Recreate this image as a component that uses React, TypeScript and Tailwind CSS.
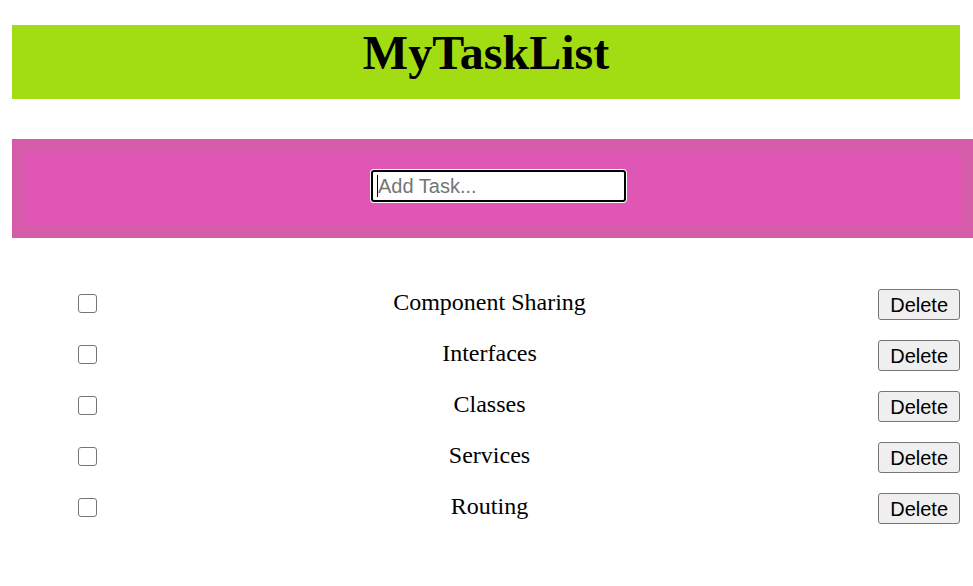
import React from "react";

const tasks = ["Component Sharing", "Interfaces", "Classes", "Services", "Routing"];

export default function App() {
  return (
    <div className="w-[973px] h-[586px] bg-white overflow-hidden" style={{ fontFamily: '"Liberation Serif", serif' }}>
      <div className="pt-[25px] px-[12px]">
        <div className="h-[74px] w-[948px] bg-[#a2dd13] text-center">
          <h1 className="text-[48px] leading-[55px] font-bold text-black" style={{ fontFamily: '"Liberation Serif", serif' }}>
            MyTaskList
          </h1>
        </div>
      </div>
      <div className="mt-[40px] ml-[12px] w-[961px] h-[99px] border-[12px] border-[#d45ca8] bg-[#e056b4] flex justify-center pt-[18px]">
        <div className="relative h-[34px] w-[257px] rounded-[4px] bg-white p-[1px] ml-[12px]">
          <input
            type="text"
            placeholder="Add Task..."
            className="w-full h-full border-2 border-black rounded-[3px] bg-white pl-[5px] text-[20px] text-black placeholder:text-[#757575] outline-none"
            style={{ fontFamily: '"Liberation Sans", Arial, sans-serif' }}
          />
          <span className="absolute left-[7px] top-[6px] w-[1px] h-[22px] bg-black" />
        </div>
      </div>
      <div className="mt-[39px] ml-[12px] w-[955px] flex flex-col">
        {tasks.map((t) => (
          <div key={t} className="flex items-center h-[51px]">
            <div className="w-[120px] flex items-center">
              <input
                type="checkbox"
                className="appearance-none ml-[66px] mt-[2px] w-[19px] h-[19px] border border-[#767676] rounded-[3px] bg-white"
              />
            </div>
            <div className="flex-1 text-center text-[24px] leading-[28px] text-black -mt-[1px]">{t}</div>
            <div className="w-[120px] flex justify-end pr-[7px]">
              <button
                className="mt-[4px] h-[31px] px-[11px] border border-[#767676] bg-[#efefef] rounded-[3px] text-[20px] leading-[22px] text-black"
                style={{ fontFamily: '"Liberation Sans", Arial, sans-serif' }}
              >
                Delete
              </button>
            </div>
          </div>
        ))}
      </div>
    </div>
  );
}
